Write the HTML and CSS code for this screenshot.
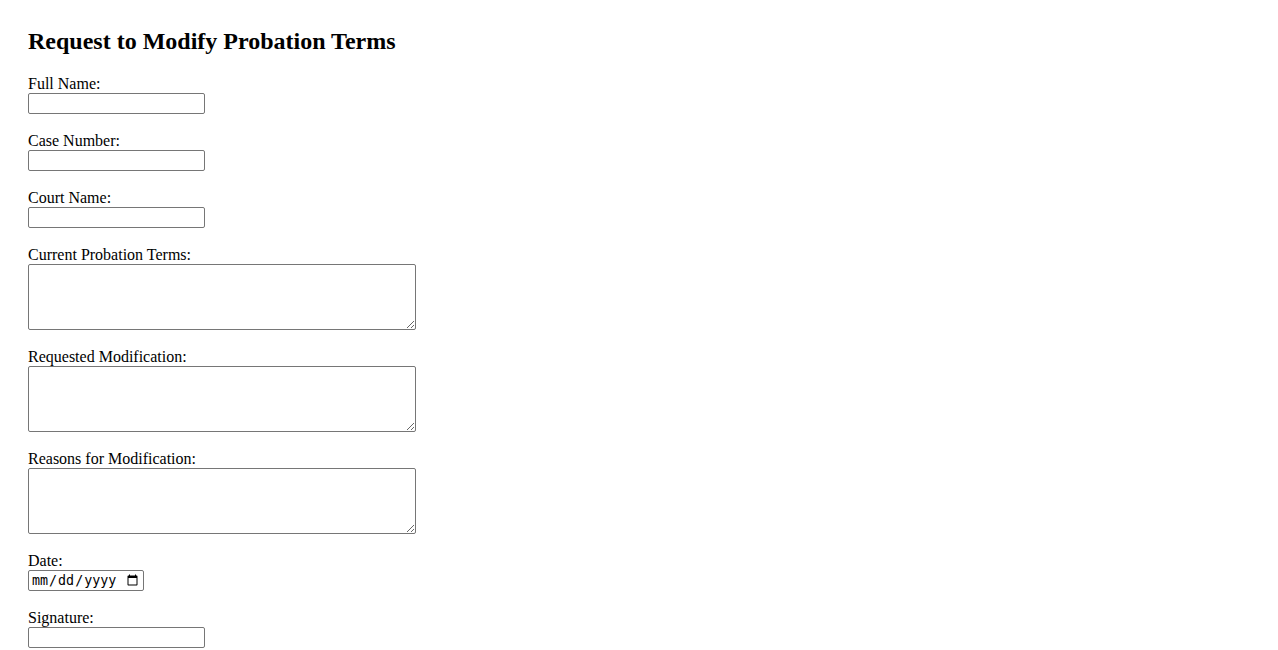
FILE: index.html
```html
<!DOCTYPE html>
<html lang="en">
<head>
<meta charset="utf-8">
<title>Request to Modify Probation Terms</title>
<link rel="stylesheet" href="styles.css">
</head>
<body>
<div class="page">
  <h2 class="title">Request to Modify Probation Terms</h2>
  <form class="form">
    <div class="field">
      <label class="label" for="name">Full Name:</label>
      <input class="text" type="text" id="name">
    </div>
    <div class="field">
      <label class="label" for="case">Case Number:</label>
      <input class="text" type="text" id="case">
    </div>
    <div class="field">
      <label class="label" for="court">Court Name:</label>
      <input class="text" type="text" id="court">
    </div>
    <div class="field">
      <label class="label" for="current">Current Probation Terms:</label>
      <textarea class="area" id="current"></textarea>
    </div>
    <div class="field">
      <label class="label" for="requested">Requested Modification:</label>
      <textarea class="area" id="requested"></textarea>
    </div>
    <div class="field">
      <label class="label" for="reasons">Reasons for Modification:</label>
      <textarea class="area" id="reasons"></textarea>
    </div>
    <div class="field">
      <label class="label" for="date">Date:</label>
      <input class="date" type="date" id="date">
    </div>
    <div class="field">
      <label class="label" for="sig">Signature:</label>
      <input class="text" type="text" id="sig">
    </div>
  </form>
</div>
</body>
</html>
```
FILE: styles.css
```css
html, body {
  margin: 0;
  padding: 0;
  background: #fff;
}
body {
  font-family: "Liberation Serif", "Times New Roman", serif;
  font-size: 16px;
  color: #000;
}
.page {
  padding: 28px 28px 0 28px;
}
.title {
  margin: 0 0 20px 0;
  font-size: 24px;
  font-weight: bold;
  line-height: 27px;
}
.form {
  display: flex;
  flex-direction: column;
  gap: 18px;
}
.field {
  display: flex;
  flex-direction: column;
  align-items: flex-start;
}
.label {
  display: block;
  line-height: 18px;
  height: 18px;
}
.text {
  box-sizing: border-box;
  width: 177px;
  height: 21px;
  margin: 0;
  border: 1px solid #767676;
  border-radius: 2px;
  padding: 1px 2px;
  font-size: 13.33px;
  font-family: "Liberation Sans", Arial, sans-serif;
  background: #fff;
}
.area {
  box-sizing: border-box;
  width: 388px;
  height: 66px;
  margin: 0;
  border: 1px solid #767676;
  border-radius: 2px;
  padding: 2px;
  font-size: 13.33px;
  font-family: "Liberation Mono", monospace;
  resize: both;
  background: #fff;
}
.date {
  box-sizing: border-box;
  width: 116px;
  height: 21px;
  margin: 0;
  border: 1px solid #767676;
  border-radius: 2px;
  padding: 1px 2px;
  font-size: 13.33px;
  font-family: "DejaVu Sans Mono", monospace;
  background: #fff;
}
```
